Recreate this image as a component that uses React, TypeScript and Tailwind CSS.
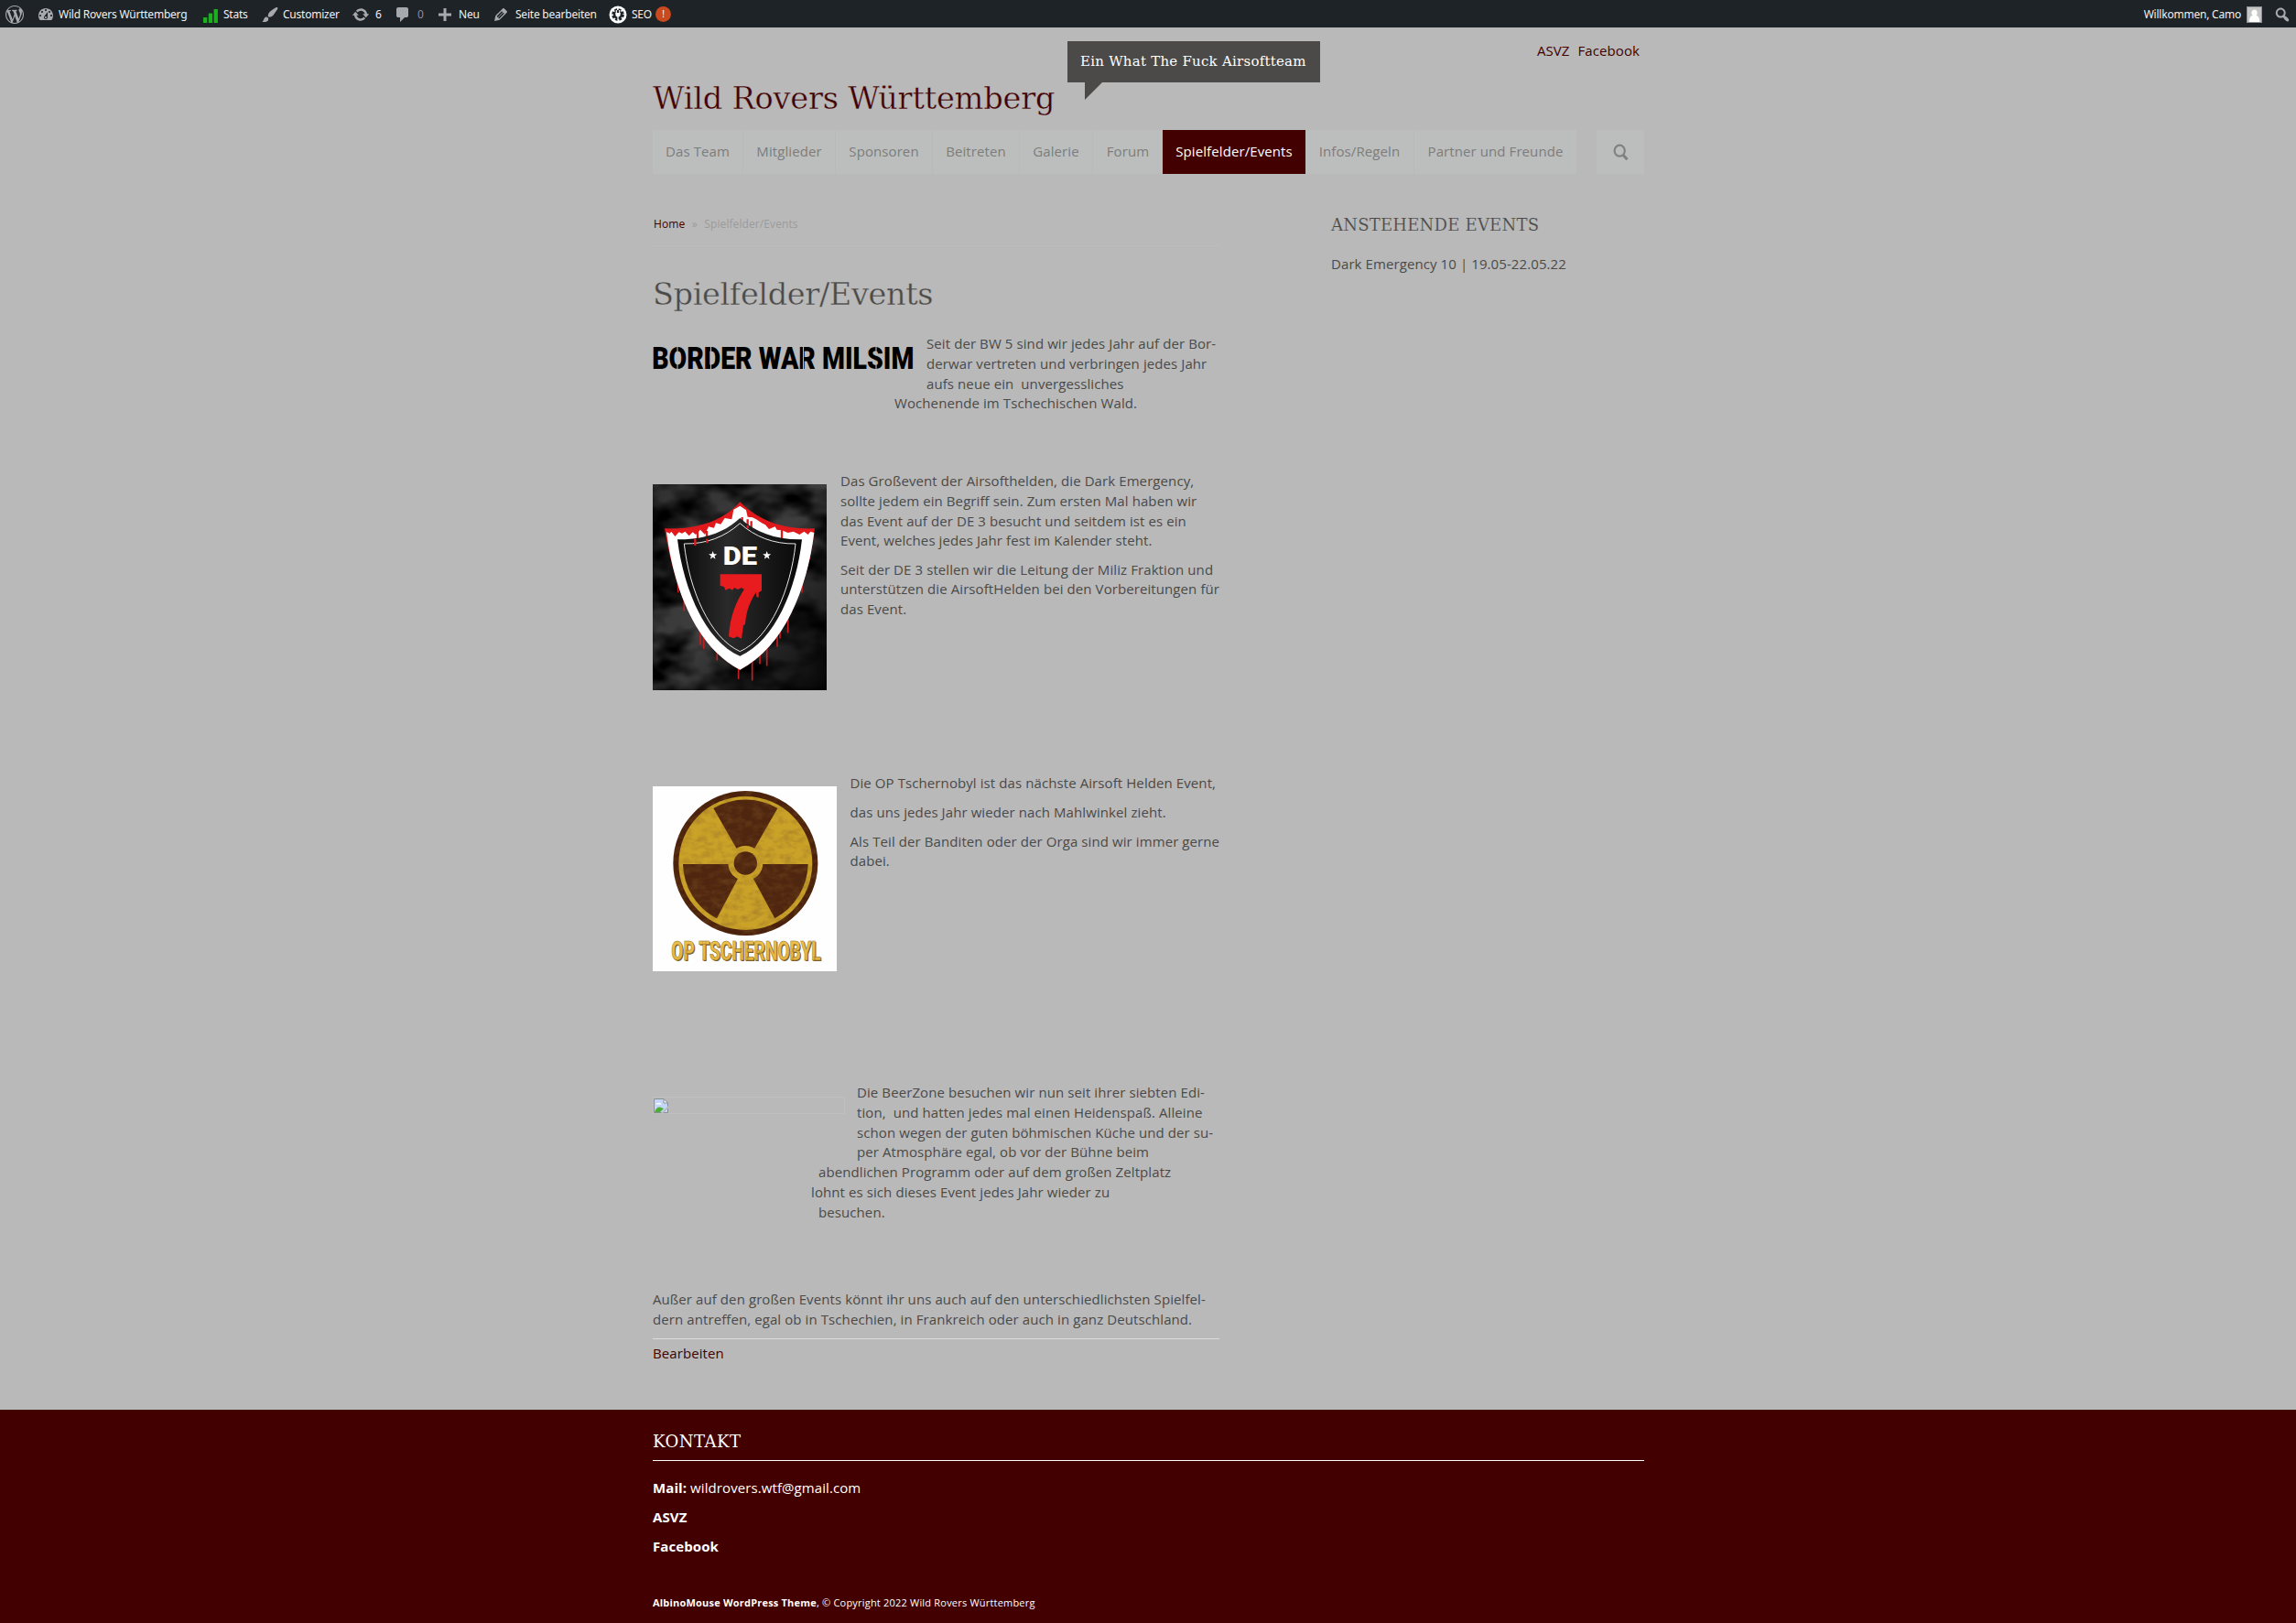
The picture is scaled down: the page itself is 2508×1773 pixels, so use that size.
import React from 'react';

const HEADING = "font-['DejaVu_Serif',serif]";

const DASHICONS = {
  dashboard:
    'M3.76 16h12.48c1.1-1.37 1.76-3.11 1.76-5 0-4.42-3.58-8-8-8s-8 3.58-8 8c0 1.89.66 3.63 1.76 5zM10 4c.55 0 1 .45 1 1s-.45 1-1 1-1-.45-1-1 .45-1 1-1zM6 6c.55 0 1 .45 1 1s-.45 1-1 1-1-.45-1-1 .45-1 1-1zm8 0c.55 0 1 .45 1 1s-.45 1-1 1-1-.45-1-1 .45-1 1-1zm-5.37 5.55L12 7v6c0 1.1-.9 2-2 2s-2-.9-2-2c0-.57.24-1.08.63-1.45zM4 10c.55 0 1 .45 1 1s-.45 1-1 1-1-.45-1-1 .45-1 1-1zm12 0c.55 0 1 .45 1 1s-.45 1-1 1-1-.45-1-1 .45-1 1-1zm-5 3c0-.55-.45-1-1-1s-1 .45-1 1 .45 1 1 1 1-.45 1-1z',
  brush:
    'M18.33 3.57s.27-.8-.31-1.36c-.53-.52-1.22-.24-1.22-.24-.61.3-5.76 3.47-7.67 5.57-.86.96-2.06 3.79-1.09 4.82.92.98 3.96-.17 4.79-1 2.06-2.06 5.21-7.17 5.5-7.79zM1.4 17.65c2.37-1.56 1.46-3.41 3.23-4.64.93-.65 2.22-.62 3.08.29.63.67.8 2.57-.16 3.46-1.57 1.45-4 1.55-6.15.89z',
  update:
    'M10.2 3.28c3.53 0 6.43 2.61 6.92 6h2.08l-3.5 4-3.5-4h2.32c-.45-1.97-2.21-3.45-4.32-3.45-1.45 0-2.73.71-3.54 1.78L4.95 5.66C6.23 4.2 8.11 3.28 10.2 3.28zm-.4 13.44c-3.52 0-6.43-2.61-6.92-6H.8l3.5-4c1.17 1.33 2.33 2.67 3.5 4H5.48c.45 1.97 2.21 3.45 4.32 3.45 1.45 0 2.73-.71 3.54-1.78l1.71 1.95c-1.28 1.46-3.15 2.38-5.25 2.38z',
  comment:
    'M5 2h9q.82 0 1.41.59T16 4v7q0 .82-.59 1.41T14 13h-2l-5 5v-5H5q-.82 0-1.41-.59T3 11V4q0-.82.59-1.41T5 2z',
  plus: 'M17 8.500v3h-5.500v5.500h-3v-5.500h-5.500v-3h5.500v-5.500h3v5.500z',
  edit:
    'M13.89 3.39l2.71 2.72c.46.46.42 1.24.03 1.64l-8.01 8.02-5.56 1.16 1.16-5.58s7.6-7.63 7.99-8.03c.39-.39 1.22-.39 1.68.07zm-2.73 2.79l-5.59 5.61 1.11 1.11 5.54-5.65zm-2.97 8.23l5.58-5.6-1.07-1.08-5.59 5.6z',
  search:
    'M12.14 4.18c1.87 1.87 2.11 4.75.72 6.89.12.1.22.21.36.31.2.16.47.36.81.59.34.24.56.39.66.47.42.31.73.57.94.78.32.32.6.65.84 1 .25.35.44.69.59 1.04.14.35.21.68.18 1-.02.32-.14.59-.36.81s-.49.34-.81.36c-.31.02-.65-.04-.99-.19-.35-.14-.7-.34-1.04-.59-.35-.24-.68-.52-1-.84-.21-.21-.47-.52-.77-.93-.1-.13-.25-.35-.47-.66-.22-.32-.4-.57-.56-.78-.16-.2-.29-.35-.44-.5-2.07 1.09-4.69.76-6.44-.98-2.14-2.15-2.14-5.64 0-7.78 2.15-2.15 5.63-2.15 7.78 0zm-1.41 6.36c1.36-1.37 1.36-3.58 0-4.95-1.37-1.37-3.59-1.37-4.95 0-1.37 1.37-1.37 3.58 0 4.95 1.36 1.37 3.58 1.37 4.95 0z',
  wordpress:
    'M20 10c0-5.510-4.490-10-10-10C4.480 0 0 4.490 0 10c0 5.520 4.480 10 10 10 5.510 0 10-4.480 10-10zM7.780 15.370L4.370 6.220c.550-.020 1.170-.080 1.170-.080.500-.060.440-1.130-.060-1.110 0 0-1.450.110-2.370.110-.180 0-.370 0-.580-.010C4.120 2.690 6.870 1.110 10 1.110c2.330 0 4.450.870 6.050 2.340-.680-.110-1.650.390-1.650 1.580 0 .740.450 1.360.900 2.100.350.610.550 1.360.550 2.460 0 1.490-1.400 5-1.400 5l-3.030-8.370c.540-.020.820-.170.820-.170.500-.050.440-1.250-.060-1.220 0 0-1.440.120-2.380.120-.870 0-2.330-.120-2.330-.120-.500-.030-.560 1.200-.060 1.220l.920.080 1.260 3.410zM17.410 10c.240-.640.740-1.870.430-4.250.700 1.290 1.050 2.710 1.050 4.250 0 3.290-1.730 6.240-4.400 7.780.970-2.590 1.940-5.200 2.920-7.780zM6.100 18.090C3.120 16.650 1.110 13.530 1.110 10c0-1.300.230-2.480.720-3.590C3.250 10.300 4.670 14.200 6.100 18.090zm4.030-6.630l2.580 6.980c-.860.290-1.760.450-2.710.450-.790 0-1.570-.110-2.290-.330.810-2.380 1.620-4.740 2.420-7.100z',
};

function Dash({ name }: { name: keyof typeof DASHICONS }) {
  return (
    <svg viewBox="0 0 20 20" className="size-5 shrink-0 fill-[#a7aaad]">
      <path d={DASHICONS[name]} />
    </svg>
  );
}

function AdminBar() {
  return (
    <div className="flex h-[30px] items-center bg-[#1d2327] pt-px pl-1.5 font-['Noto_Sans','Open_Sans',sans-serif] text-xs tracking-[-0.22px] text-[#f0f0f1]">
      <div className="w-[34px]"><Dash name="wordpress" /></div>
      <div className="flex w-[180px] items-center gap-1"><Dash name="dashboard" />Wild Rovers Württemberg</div>
      <div className="flex w-[65px] items-center gap-1">
        <svg viewBox="0 0 20 20" className="size-5 fill-[#1cb01c]">
          <path d="M2 13h4.300v6H2zM7.800 8.500h4.300V19H7.800zM13.600 4h4.300v15h-4.300z" />
        </svg>
        Stats
      </div>
      <div className="flex w-[99px] items-center gap-1"><Dash name="brush" />Customizer</div>
      <div className="flex w-[46px] items-center gap-1.5"><Dash name="update" />6</div>
      <div className="flex w-[46px] items-center gap-1.5 text-[#8c8f94]"><Dash name="comment" />0</div>
      <div className="flex w-[61px] items-center gap-[5px]"><Dash name="plus" />Neu</div>
      <div className="flex w-[128px] items-center gap-1.5"><Dash name="edit" />Seite bearbeiten</div>
      <div className="flex items-center gap-[5px]">
        <svg viewBox="0 0 20 20" className="size-5">
          <circle cx="10" cy="10" r="9.500" fill="#fff" />
          <circle cx="10" cy="10" r="5.400" fill="none" stroke="#1d2327" strokeWidth="2.800" strokeDasharray="2.700 1.540" />
          <circle cx="10" cy="10" r="5" fill="#1d2327" />
          <path d="M8.300 5v3M11.700 5v3M10 12v4.500" stroke="#fff" strokeWidth="1.200" />
          <path d="M7.300 8h5.400v1.500a2.700 2.900 0 0 1-5.400 0z" fill="#fff" />
        </svg>
        SEO
        <span className="-ml-px flex size-[17px] items-center justify-center rounded-full bg-[#ca4a1f] text-[10px] text-white">!</span>
      </div>
      <div className="ml-auto flex items-center pr-[5px]">
        Willkommen, Camo
        <svg viewBox="0 0 17 18" className="mr-3 ml-1.5 h-[18px] w-[17px]">
          <rect width="17" height="18" fill="#8c8f94" />
          <rect x="1" y="1" width="15" height="16" fill="#c5c5c5" />
          <path d="M8.500 3.500a3.300 3.500 0 0 1 2 6.300c2.500.700 3.700 3 3.700 7.200H3c0-4.200 1.200-6.500 3.600-7.200a3.300 3.500 0 0 1 1.900-6.300z" fill="#fff" />
        </svg>
        <Dash name="search" />
      </div>
    </div>
  );
}

function Nav() {
  const item = 'border-r border-[#b9b9b9] bg-[#bcbebd]';
  return (
    <nav className="flex h-12 text-center leading-[47px] text-[#7c7c7c]">
      <a className={`w-[99px] ${item}`}>Das Team</a>
      <a className={`w-[101px] ${item}`}>Mitglieder</a>
      <a className={`w-[106px] ${item}`}>Sponsoren</a>
      <a className={`w-[95px] ${item}`}>Beitreten</a>
      <a className={`w-[80px] ${item}`}>Galerie</a>
      <a className="w-[76px] bg-[#bcbebd]">Forum</a>
      <a className="w-[156px] bg-[#420000] text-white">Spielfelder/Events</a>
      <a className={`w-[119px] ${item}`}>Infos/Regeln</a>
      <a className="w-[177px] bg-[#bcbebd]">Partner und Freunde</a>
      <span className="ml-auto flex w-[52px] items-center justify-center bg-[#bcbebd]">
        <svg viewBox="0 0 17 20" className="mt-[2px] h-5 w-[17px]" fill="none" stroke="#808080">
          <ellipse cx="7.200" cy="7.700" rx="5.600" ry="6" strokeWidth="2.200" />
          <path d="M11 12.300l4.500 5" strokeWidth="3" />
        </svg>
      </span>
    </nav>
  );
}

function BorderWarLogo() {
  return (
    <svg viewBox="0 -10 286 46" className="mt-[3px] h-[46px] w-[286px] shrink-0">
      <text x="-1" y="24.500" transform="scale(0.863 1)" fontWeight="900" fontSize="33" letterSpacing="0" fill="#000" className="font-[Roboto]">
        BORDER WAR MILSIM
      </text>
      <path d="M27 0v8M27 17v9M63.500 0v26M164.500 0v26M244 0v7M244 18v8" stroke="#b9b9b9" strokeWidth="1.100" />
    </svg>
  );
}

function DarkEmergencyLogo() {
  return (
    <svg viewBox="39 57 570 675" className="mt-[14px] h-[225px] w-[190px] shrink-0">
      <defs>
        <linearGradient id="de-back" x1="0" y1="0" x2="1" y2="1">
          <stop offset="0" stopColor="#303030" />
          <stop offset="0.500" stopColor="#3e3e3e" />
          <stop offset="0.850" stopColor="#1a1a1a" />
          <stop offset="1" stopColor="#030303" />
        </linearGradient>
        <filter id="de-smoke" x="0" y="0" width="1" height="1">
          <feTurbulence type="fractalNoise" baseFrequency="0.007 0.011" numOctaves="3" seed="7" />
          <feColorMatrix values="0 0 0 0 0  0 0 0 0 0  0 0 0 0 0  2.600 0 0 0 -0.900" />
        </filter>
        <linearGradient id="de-inner" x1="0" x2="1">
          <stop offset="0" stopColor="#0a0a0a" />
          <stop offset="0.400" stopColor="#2a2a2a" />
          <stop offset="1" stopColor="#080808" />
        </linearGradient>
      </defs>
      <rect x="39" y="57" width="570" height="675" fill="url(#de-back)" />
      <rect x="39" y="57" width="570" height="675" filter="url(#de-smoke)" />
      <path
        d="M122 340v70M142 400v70M195 520v62M206 540v55M250 600v32M320 640v54M365 640v58M390 600v44M413 580v70M447 520v68M456 510v50M482 480v62M528 340v70M553 260v42"
        stroke="#c81d20"
        strokeLinecap="round"
        strokeWidth="5"
      />
      <path d="M325 115C390 180 470 205 570 202C545 400 470 590 325 665C180 590 110 400 78 202C180 205 270 180 325 115z" fill="#e0191d" />
      <path
        d="M84 214L95 218L100 212L112 228L125 214L135 218L145 212L158 226L170 214L180 222L195 206L210 222L222 196L240 200L246 184L262 188L275 168L298 172L304 140L325 128L345 142L350 164L366 166L378 172L396 184L408 190L420 204L440 196L446 206L462 208L482 216L500 212L520 222L535 212L548 222L556 212L568 216C545 400 470 590 325 665C180 590 108 400 84 214z"
        fill="#fff"
      />
      <path d="M186 206v30M216 210v28M332 165v24M350 172v28M362 178v26M462 206v34" stroke="#e0191d" strokeWidth="7" />
      <path d="M325 168C375 215 445 240 528 238C510 400 440 570 325 620C210 570 140 400 120 238C205 240 275 215 325 168z" fill="url(#de-inner)" />
      <path d="M325 185C375 230 435 253 507 252C492 400 425 560 325 605C225 560 158 400 142 252C215 253 275 230 325 185z" fill="none" stroke="#e8e8e8" strokeWidth="3" />
      <path d="M178 236v22M217 236v14M350 192v10" stroke="#e0191d" strokeWidth="7" />
      <text x="269" y="321" textLength="112" lengthAdjust="spacingAndGlyphs" fontSize="84" fontWeight="900" fill="#fff" className="font-[Roboto]">DE</text>
      <path
        d="M236 276l3.500 10h10l-8 6.500 3 10-8.500-6-8.500 6 3-10-8-6.500h10zM413 276l3.500 10h10l-8 6.500 3 10-8.500-6-8.500 6 3-10-8-6.500h10z"
        fill="#fff"
      />
      <path
        d="M260 352H396V406L386 412V428L379 426L378 410C352 450 345 480 342 516L336 520L330 563L316 556L304 562L288 556C292 490 312 440 344 394L338 402L330 396L318 402L306 396L300 404L290 398L278 404L272 392L260 390z"
        fill="#e81b1f"
      />
    </svg>
  );
}

function TschernobylLogo() {
  return (
    <svg viewBox="39 57 603 606" className="mt-[14px] h-[202px] w-[201px] shrink-0">
      <defs>
        <filter id="op-grain" x="0" y="0" width="1" height="1">
          <feTurbulence type="fractalNoise" baseFrequency="0.030 0.050" numOctaves="4" seed="4" />
          <feColorMatrix values="0 0 0 0 0.230  0 0 0 0 0.100  0 0 0 0 0.020  1.400 0 0 0 -0.550" />
          <feComposite in2="SourceGraphic" operator="in" />
        </filter>
        <linearGradient id="op-gold" x1="0" y1="0" x2="0" y2="1">
          <stop offset="0" stopColor="#f0c44f" />
          <stop offset="1" stopColor="#e0ae3c" />
        </linearGradient>
      </defs>
      <rect x="39" y="57" width="603" height="606" fill="#fefefe" />
      <circle cx="343" cy="309" r="237" fill="#4a210c" />
      <circle cx="343" cy="309" r="219" fill="#caa228" />
      <g fill="#4f260f">
        <path d="M343 312L238 129A207 207 0 0 1 448 129z" />
        <path d="M343 312H548A207 207 0 0 1 439 490z" />
        <path d="M343 312H138A207 207 0 0 0 249 490z" />
      </g>
      <circle cx="343" cy="309" r="57" fill="#caa228" />
      <circle cx="343" cy="309" r="38" fill="#4f260f" />
      <circle cx="343" cy="309" r="237" filter="url(#op-grain)" opacity="0.600" />
      <text x="103" y="630" textLength="490" lengthAdjust="spacingAndGlyphs" fontSize="88" fontWeight="800" fill="#6f5a2c" className="font-[Roboto]">OP TSCHERNOBYL</text>
      <text x="100" y="627" textLength="490" lengthAdjust="spacingAndGlyphs" fontSize="88" fontWeight="800" fill="url(#op-gold)" stroke="#8a6c2a" strokeWidth="1.500" className="font-[Roboto]">OP TSCHERNOBYL</text>
    </svg>
  );
}

function BrokenImage() {
  return (
    <div className="mt-[15px] flex h-[19px] w-[210px] shrink-0 items-center border border-[#c0c0c0]">
      <svg viewBox="0 0 16 16" className="size-4">
        <path d="M.500.500h10.500l4.500 4.500v10.500H.500z" fill="#c3d6f8" stroke="#8b8f93" />
        <path d="M11 .500V5h4.500z" fill="#fff" stroke="#8b8f93" />
        <path d="M2.500 6.500a2 2 0 0 1 3-1.500 2 2 0 0 1 3 1.500z" fill="#fff" />
        <path d="M1 15c1-4 3.500-6 6-5.500L11 11l-4 4z" fill="#4caf35" />
        <path d="M8 16l8-8v2.500L10.500 16z" fill="#b9b9b9" />
      </svg>
    </div>
  );
}

export default function App() {
  return (
    <div className="flex h-[1773px] w-[2508px] flex-col bg-[#b9b9b9] font-['Open_Sans',sans-serif] text-[15px] leading-[21.75px] tracking-[0.09px] text-[#4b4a48]">
      <AdminBar />

      <div className="ml-[713px] w-[1083px] grow">
        <header className="flex h-28 items-start">
          <h1 className={`mt-[54px] w-[453px] text-[33.6px] leading-[48px] tracking-[-0.22px] whitespace-nowrap text-[#420000] [-webkit-text-stroke:0.4px_#b9b9b9] ${HEADING}`}>
            Wild Rovers Württemberg
          </h1>
          <div className={`relative mt-[15px] h-[45px] w-[276px] bg-[#4b4a48] pl-[14px] text-[15px] leading-[44px] tracking-[0.24px] whitespace-nowrap text-white ${HEADING}`}>
            Ein What The Fuck Airsoftteam
            <svg viewBox="0 0 19 19" className="absolute top-[45px] left-[19px] size-[19px] fill-[#4b4a48]">
              <path d="M0 0h19L0 19z" />
            </svg>
          </div>
          <div className="mt-[15px] mr-[5px] ml-auto flex gap-[9px] text-[#420000]">
            <a>ASVZ</a>
            <a>Facebook</a>
          </div>
        </header>

        <Nav />

        <div className="flex">
          <main className="w-[619px] whitespace-nowrap">
            <div className="mt-[45px] flex gap-[7.5px] pl-px text-xs leading-5 text-[#9b9b9b]">
              <a className="text-[#420000]">Home</a>
              <span>»</span>
              <span>Spielfelder/Events</span>
            </div>
            <hr className="mt-[13px] border-[#bdbdbd]" />
            <h2 className={`mt-[29px] text-[33.6px] leading-[48px] tracking-[-0.4px] [-webkit-text-stroke:0.4px_#b9b9b9] ${HEADING}`}>
              Spielfelder/Events
            </h2>

            <section className="mt-[19px] flex h-[150px] items-start gap-[13px]">
              <BorderWarLogo />
              <div>
                <p>Seit der BW 5 sind wir jedes Jahr auf der Bor-</p>
                <p>derwar vertreten und verbringen jedes Jahr</p>
                <p>aufs neue ein &nbsp;unvergessliches</p>
                <p className="-ml-[35px]">Wochenende im Tschechischen Wald.</p>
              </div>
            </section>

            <section className="flex h-[330px] items-start gap-[15px]">
              <DarkEmergencyLogo />
              <div>
                <p>
                  Das Großevent der Airsofthelden, die Dark Emergency,<br />
                  sollte jedem ein Begriff sein. Zum ersten Mal haben wir<br />
                  das Event auf der DE 3 besucht und seitdem ist es ein<br />
                  Event, welches jedes Jahr fest im Kalender steht.
                </p>
                <p className="mt-[9.5px]">
                  Seit der DE 3 stellen wir die Leitung der Miliz Fraktion und<br />
                  unterstützen die AirsoftHelden bei den Vorbereitungen für<br />
                  das Event.
                </p>
              </div>
            </section>

            <section className="flex h-[338px] items-start gap-[14.5px]">
              <TschernobylLogo />
              <div>
                <p>Die OP Tschernobyl ist das nächste Airsoft Helden Event,</p>
                <p className="mt-2.5">das uns jedes Jahr wieder nach Mahlwinkel zieht.</p>
                <p className="mt-2.5">
                  Als Teil der Banditen oder der Orga sind wir immer gerne<br />
                  dabei.
                </p>
              </div>
            </section>

            <section className="flex h-[226px] items-start gap-[13px]">
              <BrokenImage />
              <div>
                <p>Die BeerZone besuchen wir nun seit ihrer siebten Edi-</p>
                <p>tion, &nbsp;und hatten jedes mal einen Heidenspaß. Alleine</p>
                <p>schon wegen der guten böhmischen Küche und der su-</p>
                <p>per Atmosphäre egal, ob vor der Bühne beim</p>
                <p className="-ml-[42px]">abendlichen Programm oder auf dem großen Zeltplatz</p>
                <p className="-ml-[50px]">lohnt es sich dieses Event jedes Jahr wieder zu</p>
                <p className="-ml-[42px]">besuchen.</p>
              </div>
            </section>

            <p className="leading-[21.5px]">
              Außer auf den großen Events könnt ihr uns auch auf den unterschiedlichsten Spielfel-<br />
              dern antreffen, egal ob in Tschechien, in Frankreich oder auch in ganz Deutschland.
            </p>
            <hr className="mt-2.5 mb-[5px] border-[#dddddd]" />
            <a className="text-[#420000]">Bearbeiten</a>
          </main>

          <aside className="ml-[122px]">
            <h3 className={`mt-[43px] text-[18px] leading-[26px] tracking-[0.22px] [-webkit-text-stroke:0.2px_#b9b9b9] ${HEADING}`}>
              ANSTEHENDE EVENTS
            </h3>
            <p className="mt-[19px]">Dark Emergency 10 | 19.05-22.05.22</p>
          </aside>
        </div>
      </div>

      <footer className="h-[233px] bg-[#420000] pl-[713px] text-white">
        <div className="w-[1083px] pt-[22px]">
          <h3 className={`text-[18px] leading-[26px] tracking-[0.5px] ${HEADING}`}>KONTAKT</h3>
          <hr className="mt-[7px] mb-[19px] border-white" />
          <p><b>Mail:</b> wildrovers.wtf@gmail.com</p>
          <p className="mt-2.5 font-bold">ASVZ</p>
          <p className="mt-2.5 font-bold">Facebook</p>
          <p className="mt-[41px] text-[11px] leading-5 tracking-[0.2px]">
            <b>AlbinoMouse WordPress Theme</b>, © Copyright 2022 Wild Rovers Württemberg
          </p>
        </div>
      </footer>
    </div>
  );
}
